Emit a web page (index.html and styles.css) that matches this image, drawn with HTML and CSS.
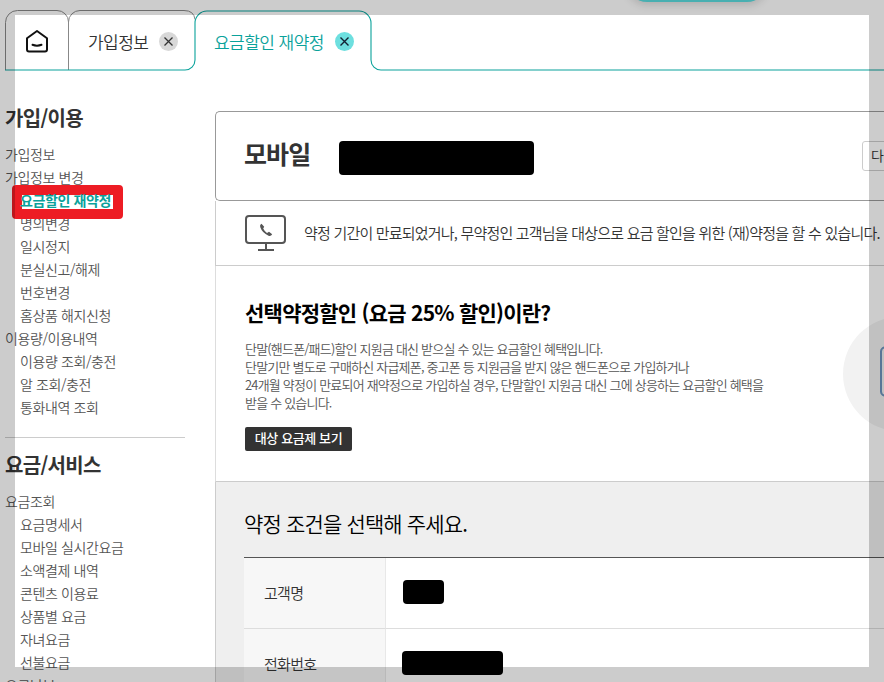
FILE: index.html
```html
<!DOCTYPE html>
<html lang="ko">
<head>
    <meta charset="UTF-8">
    <meta name="viewport" content="width=device-width, initial-scale=1.0">
    <title>요금할인 재약정</title>
    <link rel="stylesheet" href="styles.css">
</head>
<body>
    <header class="tabs">
        <svg class="tabs-line" width="884" height="72" fill="none">
            <path d="M5.5 70V22.5a12 12 0 0 1 12-12H57a11.500 11.500 0 0 1 11.500 11.500V70M68.500 22a11.500 11.500 0 0 1 11.500-11.500H184q10 0 11 9" stroke="#888"/>
            <path d="M5 70H185a10 10 0 0 0 10-10V23a12 12 0 0 1 12-12H359a12 12 0 0 1 12 12V60a10 10 0 0 0 10 10H884" stroke="#0aa29b" stroke-width="1.1"/>
        </svg>
        <a class="tab tab-home">
            <svg width="24" height="24" viewBox="0 0 24 24" fill="none" stroke="#111" stroke-width="2" stroke-linecap="round" stroke-linejoin="round">
                <path d="M12 2 2 9.200V20.500Q2 22.500 4 22.500H20Q22 22.500 22 20.500V9.200ZM7.500 15.800q4.500 1.800 9 0"/>
            </svg>
        </a>
        <a class="tab tab-info">
            <span>가입정보</span>
            <svg class="close" width="19" height="19" viewBox="0 0 19 19" stroke="#333" stroke-width="1.300"><path d="m5.500 5.500 8 8m0-8-8 8"/></svg>
        </a>
        <a class="tab tab-active">
            <span>요금할인 재약정</span>
            <svg class="close" width="19" height="19" viewBox="0 0 19 19" stroke="#123" stroke-width="1.400"><path d="m5.500 5.500 8 8m0-8-8 8"/></svg>
        </a>
        <div class="top-pill"></div>
    </header>

    <div class="layout">
        <nav class="sidebar">
            <h2>가입/이용</h2>
            <ul>
                <li>가입정보</li>
                <li>가입정보 변경</li>
                <li class="sub current"><span class="marker"></span><b>요금할인 재약정</b></li>
                <li class="sub">명의변경</li>
                <li class="sub">일시정지</li>
                <li class="sub">분실신고/해제</li>
                <li class="sub">번호변경</li>
                <li class="sub">홈상품 해지신청</li>
                <li>이용량/이용내역</li>
                <li class="sub">이용량 조회/충전</li>
                <li class="sub">알 조회/충전</li>
                <li class="sub">통화내역 조회</li>
            </ul>
            <h2 class="divided">요금/서비스</h2>
            <ul>
                <li>요금조회</li>
                <li class="sub">요금명세서</li>
                <li class="sub">모바일 실시간요금</li>
                <li class="sub">소액결제 내역</li>
                <li class="sub">콘텐츠 이용료</li>
                <li class="sub">상품별 요금</li>
                <li class="sub">자녀요금</li>
                <li class="sub">선불요금</li>
                <li>요금납부</li>
            </ul>
        </nav>

        <main class="content">
            <div class="line-box">
                <strong>모바일</strong>
                <span class="mask mask-line"></span>
                <span class="other-line">다</span>
            </div>
            <div class="notice">
                <svg width="42" height="37" viewBox="0 0 42 37" fill="none" stroke="#555" stroke-width="2">
                    <rect x="1" y="2" width="39" height="27" rx="3"/>
                    <path d="M21 29v6M13 36h16"/>
                    <path d="M16.500 9.700Q14.500 10.500 15.200 13.100 17.200 19 23.500 21.800 26 22.500 27.200 20.300L24 17.700 22 19Q19.300 17 18.200 14.500L19.200 12.800Z" fill="#555" stroke="none"/>
                </svg>
                <p>약정 기간이 만료되었거나, 무약정인 고객님을 대상으로 요금 할인을 위한 (재)약정을 할 수 있습니다.</p>
            </div>
            <section class="about">
                <h1>선택약정할인 (요금 25% 할인)이란?</h1>
                <p>단말(핸드폰/패드)할인 지원금 대신 받으실 수 있는 요금할인 혜택입니다.<br>
                단말기만 별도로 구매하신 자급제폰, 중고폰 등 지원금을 받지 않은 핸드폰으로 가입하거나<br>
                24개월 약정이 만료되어 재약정으로 가입하실 경우, 단말할인 지원금 대신 그에 상응하는 요금할인 혜택을<br>
                받을 수 있습니다.</p>
                <a class="plan-button">대상 요금제 보기</a>
                <svg class="device" width="41" height="116" fill="none">
                    <circle cx="57.500" cy="58" r="57.500" fill="#f2f2f2"/>
                    <rect x="38" y="31.500" width="50" height="48" rx="4" stroke="#6f94bd" stroke-width="2"/>
                </svg>
            </section>
            <section class="terms">
                <h2>약정 조건을 선택해 주세요.</h2>
                <dl>
                    <dt>고객명</dt>
                    <dd><span class="mask mask-name"></span></dd>
                    <dt>전화번호</dt>
                    <dd><span class="mask mask-phone"></span></dd>
                </dl>
            </section>
        </main>
    </div>
    <div class="frame"></div>
</body>
</html>
```
FILE: styles.css
```css
* {
    box-sizing: border-box;
    margin: 0;
    padding: 0;
}

body {
    width: 884px;
    height: 682px;
    overflow: hidden;
    position: relative;
    background: #fff;
    color: #333;
    font-family: "Noto Sans CJK KR", "Noto Sans", sans-serif;
    font-weight: 350;
}

ul {
    list-style: none;
}

/* tabs */
.tabs {
    position: relative;
    display: flex;
    height: 72px;
    padding: 10px 0 0 5px;
}

.tabs-line {
    position: absolute;
    top: 0;
    left: 0;
}

.tab {
    display: flex;
    align-items: center;
    height: 62px;
    padding-top: 1px;
    font-size: 17px;
    letter-spacing: -0.55px;
}

.tab-home {
    width: 64px;
    padding: 0 0 1px 20px;
}

.tab-info {
    width: 126px;
    padding-left: 19px;
    gap: 11px;
}

.tab-active {
    padding-left: 19px;
    gap: 11px;
    color: #0aa29b;
}

.close {
    border-radius: 50%;
    background: #d8d8d8;
}

.tab-active .close {
    background: #6ddfdf;
}

.top-pill {
    position: absolute;
    top: -38px;
    left: 627px;
    width: 140px;
    height: 40px;
    border-radius: 20px;
    background: #5bdbde;
    box-shadow: 0 3px 8px rgba(0, 0, 0, 0.15);
}

.layout {
    display: grid;
    grid-template-columns: 215px 669px;
}

/* sidebar */
.sidebar {
    padding: 31px 30px 0 5px;
    color: #555;
}

.sidebar h2 {
    height: 40px;
    font-size: 20px;
    line-height: 30px;
    letter-spacing: -0.7px;
    font-weight: 700;
    color: #333;
}

.sidebar .divided {
    height: 53px;
    margin-top: 18px;
    padding-top: 12px;
    border-top: 1px solid #ccc;
}

.sidebar li {
    height: 23px;
    font-size: 14px;
    line-height: 23px;
    letter-spacing: -0.4px;
    white-space: nowrap;
}

.sidebar .sub {
    padding-left: 15px;
}

.current {
    position: relative;
    z-index: 1;
    color: #0aa29b;
}

.current b {
    position: relative;
    font-weight: 700;
}

/* red border with a white window for the label */
.marker {
    position: absolute;
    top: -4px;
    left: 7px;
    width: 111px;
    height: 34px;
    border: 10px solid #ed1c24;
    border-radius: 4px;
    background: #fff;
}

/* content */
.content {
    padding-top: 39px;
}

.line-box {
    display: flex;
    align-items: center;
    height: 90px;
    padding: 0 0 0 28px;
    border: 1px solid #999;
    border-right: 0;
    border-radius: 5px 0 0 5px;
    overflow: hidden;
}

.line-box strong {
    width: 95px;
    margin-top: -6px;
    font-size: 25px;
    line-height: 36px;
    letter-spacing: -0.9px;
    font-weight: 600;
    flex: none;
}

.mask {
    display: block;
    border-radius: 4px;
    background: #000;
}

.mask-line {
    width: 195px;
    height: 34px;
    margin-top: 4px;
    flex: none;
}

.other-line {
    width: 60px;
    height: 30px;
    margin-left: 328px;
    padding-left: 8px;
    border: 1px solid #ccc;
    border-radius: 3px;
    font-size: 14px;
    line-height: 26px;
    flex: none;
}

.notice {
    display: flex;
    height: 65px;
    padding: 13px 0 0 29px;
    border-left: 1px solid #ccc;
    border-bottom: 1px solid #ccc;
}

.notice svg {
    flex: none;
}

.notice p {
    margin-left: 17px;
    font-size: 15px;
    line-height: 37px;
    letter-spacing: -0.8px;
    white-space: nowrap;
}

.about {
    position: relative;
    height: 216px;
    padding: 30px 0 0 29px;
    border-left: 1px solid #ddd;
    border-bottom: 1px solid #ccc;
}

.about h1 {
    font-size: 21px;
    line-height: 32px;
    letter-spacing: -0.75px;
    font-weight: 600;
    color: #000;
}

.about p {
    margin-top: 12px;
    font-size: 13px;
    line-height: 18px;
    letter-spacing: -0.8px;
    white-space: nowrap;
    color: #555;
}

.plan-button {
    display: block;
    width: 107px;
    height: 24px;
    margin-top: 15px;
    border-radius: 2px;
    background: #333;
    color: #fff;
    font-size: 13px;
    line-height: 21px;
    letter-spacing: -0.4px;
    font-weight: 500;
    text-align: center;
}

.device {
    position: absolute;
    top: 50px;
    right: 0;
}

.terms {
    height: 200px;
    padding: 24px 0 0 28px;
    border-left: 1px solid #ccc;
    background: #efefef;
}

.terms h2 {
    height: 51px;
    font-size: 21px;
    line-height: 34px;
    letter-spacing: -0.85px;
    font-weight: 350;
    color: #000;
}

.terms dl {
    display: grid;
    grid-template-columns: 142px 1fr;
    border-top: 1px solid #555;
}

.terms dt,
.terms dd {
    display: flex;
    align-items: center;
    height: 71px;
    border-bottom: 1px solid #ddd;
}

.terms dt {
    padding: 0 0 2px 20px;
    border-right: 1px solid #e8e8e8;
    background: #f7f7f7;
    font-size: 15px;
    letter-spacing: -0.7px;
}

.terms dd {
    background: #fff;
}

.mask-name {
    width: 41px;
    height: 24px;
    margin: -2px 0 0 17px;
}

.mask-phone {
    width: 101px;
    height: 24px;
    margin: -2px 0 0 16px;
}

/* shaded edge laid over the whole page */
.frame {
    position: absolute;
    inset: 0;
    z-index: 5;
    border: 15px solid rgba(0, 0, 0, 0.2);
    pointer-events: none;
}
```
